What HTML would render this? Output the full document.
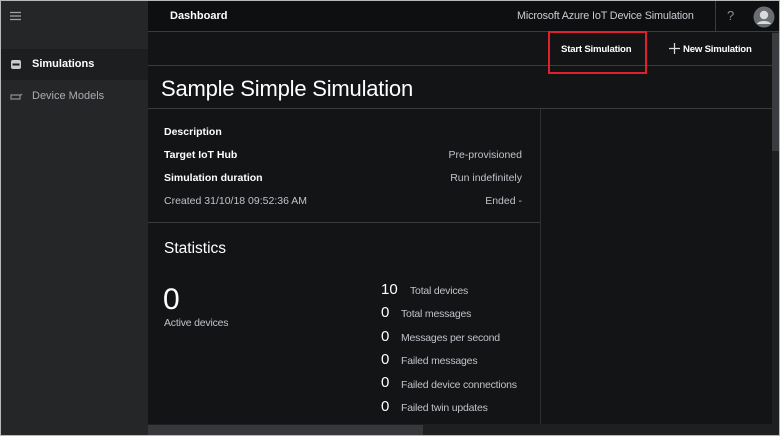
<!DOCTYPE html>
<html><head><meta charset="utf-8"><style>
*{margin:0;padding:0;box-sizing:border-box}
body{width:780px;height:436px;overflow:hidden;background:#131416;font-family:"Liberation Sans",sans-serif;position:relative;color:#fff}
.a{position:absolute;white-space:nowrap}
.frame{left:0;top:0;width:780px;height:436px;border:1px solid #b8b8b8;z-index:10;pointer-events:none}
.side{left:0;top:0;width:148px;height:436px;background:#252628}
.r{font-size:10.5px;color:#fff;font-weight:bold}
.l{font-size:10.5px;color:#bfc3c9}
.s{font-size:10.5px;color:#bfc3c9;letter-spacing:-0.2px}
</style></head><body>
<div class="a side"></div>
<svg class="a" style="left:10px;top:11px" width="12" height="10"><path d="M0 1.5h11M0 5h11M0 8.5h11" stroke="#a0a3a8" stroke-width="1.2"/></svg>
<div class="a" style="left:0;top:49px;width:148px;height:31px;background:#1d1e20"></div>
<svg class="a" style="left:10px;top:59px" width="12" height="11"><rect x="1" y="1" width="10" height="9" rx="2" fill="#c8cacc"/><rect x="2.5" y="4.5" width="7" height="2" fill="#1d1e20"/></svg>
<div class="a" style="left:32px;top:58px;font-size:11px;font-weight:bold;color:#fff">Simulations</div>
<svg class="a" style="left:10px;top:92px" width="13" height="9"><path d="M1 3h9v4H1zM10 4l2-2" stroke="#8a8e94" fill="none" stroke-width="1.2"/></svg>
<div class="a" style="left:32px;top:90px;font-size:11px;color:#a9aeb4">Device Models</div>

<div class="a" style="left:148px;top:0;width:632px;height:32px;background:#0e0f11;border-bottom:1px solid #3a3b3d"></div>
<div class="a" style="left:170px;top:10px;font-size:11px;font-weight:bold;color:#fff">Dashboard</div>
<div class="a" style="left:517px;top:10px;font-size:10.8px;color:#c8ccd2;letter-spacing:-0.15px">Microsoft Azure IoT Device Simulation</div>
<div class="a" style="left:715px;top:0;width:1px;height:32px;background:#3a3b3d"></div>
<div class="a" style="left:727px;top:8px;font-size:13px;color:#8a8e94">?</div>
<svg class="a" style="left:753px;top:6px" width="22" height="22"><circle cx="11" cy="11" r="10.5" fill="#6a6d72"/><circle cx="11" cy="9" r="4.2" fill="#d8dadc"/><path d="M4 18c2-4 12-4 14 0" fill="#d8dadc"/></svg>

<div class="a" style="left:148px;top:65px;width:624px;height:1px;background:#3a3b3d"></div>
<div class="a" style="left:548px;top:31px;width:99px;height:43px;border:2px solid #e0202e"></div>
<div class="a" style="left:561px;top:44px;font-size:9.6px;font-weight:bold;color:#fff;letter-spacing:-0.2px">Start Simulation</div>
<svg class="a" style="left:669px;top:43px" width="11" height="11"><path d="M5.5 0v11M0 5.5h11" stroke="#ddd" stroke-width="1.2"/></svg>
<div class="a" style="left:683px;top:44px;font-size:9.6px;font-weight:bold;color:#fff;letter-spacing:-0.2px">New Simulation</div>

<div class="a" style="left:161px;top:76px;font-size:22px;color:#fff;letter-spacing:-0.2px">Sample Simple Simulation</div>
<div class="a" style="left:148px;top:108px;width:624px;height:1px;background:#3a3b3d"></div>
<div class="a" style="left:540px;top:109px;width:1px;height:315px;background:#2e2f31"></div>

<div class="a r" style="left:164px;top:126px">Description</div>
<div class="a r" style="left:164px;top:149px">Target IoT Hub</div>
<div class="a r" style="left:164px;top:172px">Simulation duration</div>
<div class="a l" style="left:164px;top:195px">Created 31/10/18 09:52:36 AM</div>
<div class="a l" style="left:380px;top:149px;width:142px;text-align:right">Pre-provisioned</div>
<div class="a l" style="left:380px;top:172px;width:142px;text-align:right">Run indefinitely</div>
<div class="a l" style="left:380px;top:195px;width:142px;text-align:right">Ended -</div>
<div class="a" style="left:148px;top:222px;width:392px;height:1px;background:#3a3b3d"></div>

<div class="a" style="left:164px;top:240px;font-size:15.5px;color:#fff">Statistics</div>
<div class="a" style="left:163px;top:283px;font-size:30px;color:#fff">0</div>
<div class="a s" style="left:164px;top:317px">Active devices</div>

<div class="a" style="left:381px;top:281px;font-size:15px">10</div><div class="a s" style="left:410px;top:285px">Total devices</div>
<div class="a" style="left:381px;top:304px;font-size:15px">0</div><div class="a s" style="left:401px;top:308px">Total messages</div>
<div class="a" style="left:381px;top:328px;font-size:15px">0</div><div class="a s" style="left:401px;top:332px">Messages per second</div>
<div class="a" style="left:381px;top:351px;font-size:15px">0</div><div class="a s" style="left:401px;top:355px">Failed messages</div>
<div class="a" style="left:381px;top:374px;font-size:15px">0</div><div class="a s" style="left:401px;top:379px">Failed device connections</div>
<div class="a" style="left:381px;top:398px;font-size:15px">0</div><div class="a s" style="left:401px;top:402px">Failed twin updates</div>

<div class="a" style="left:772px;top:32px;width:8px;height:404px;background:#1e1f21"></div>
<div class="a" style="left:772px;top:33px;width:8px;height:118px;background:#3a3c3f"></div>
<div class="a" style="left:148px;top:424px;width:632px;height:12px;background:#1e1f21"></div>
<div class="a" style="left:148px;top:425px;width:275px;height:11px;background:#36383b"></div>
<div class="a frame"></div>
</body></html>
